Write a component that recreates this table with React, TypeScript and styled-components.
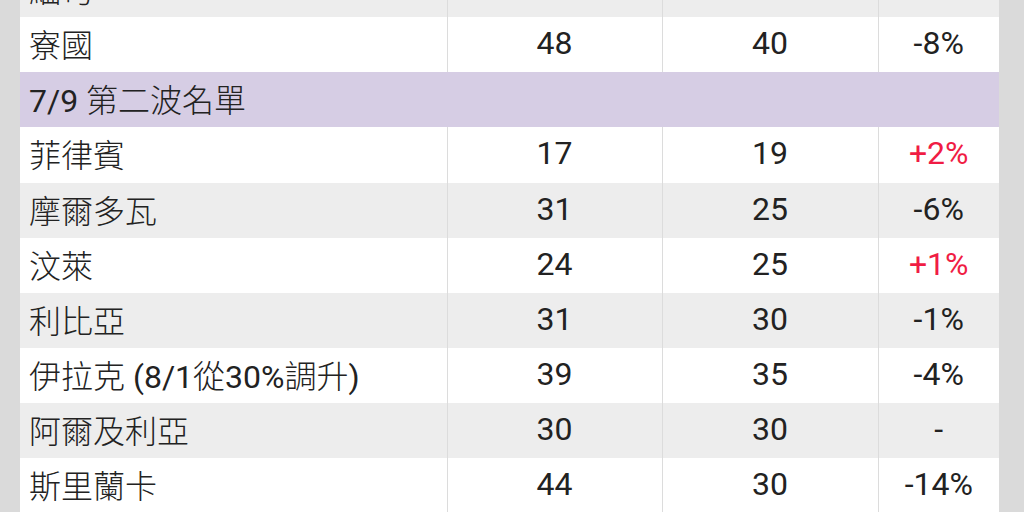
import styled, { createGlobalStyle } from "styled-components";

type Row =
  | { kind: "group"; label: string }
  | { kind: "data"; name: string; before: string; after: string; change: string; shaded: boolean };

const rows: Row[] = [
  { kind: "data", name: "緬甸", before: "", after: "", change: "", shaded: true },
  { kind: "data", name: "寮國", before: "48", after: "40", change: "-8%", shaded: false },
  { kind: "group", label: "7/9 第二波名單" },
  { kind: "data", name: "菲律賓", before: "17", after: "19", change: "+2%", shaded: false },
  { kind: "data", name: "摩爾多瓦", before: "31", after: "25", change: "-6%", shaded: true },
  { kind: "data", name: "汶萊", before: "24", after: "25", change: "+1%", shaded: false },
  { kind: "data", name: "利比亞", before: "31", after: "30", change: "-1%", shaded: true },
  { kind: "data", name: "伊拉克 (8/1從30%調升)", before: "39", after: "35", change: "-4%", shaded: false },
  { kind: "data", name: "阿爾及利亞", before: "30", after: "30", change: "-", shaded: true },
  { kind: "data", name: "斯里蘭卡", before: "44", after: "30", change: "-14%", shaded: false },
];

// CJK runs get a lighter weight, latin stays regular
function Label({ text }: { text: string }) {
  const parts = text.split(/([\u3400-\u9fff]+)/).filter(Boolean);
  return (
    <>
      {parts.map((p, i) =>
        /[\u3400-\u9fff]/.test(p) ? <Cjk key={i}>{p}</Cjk> : <span key={i}>{p}</span>
      )}
    </>
  );
}

function App() {
  return (
    <>
      <GlobalStyles />
      <Page>
        <Table>
          <colgroup>
            <col style={{ width: 427 }} />
            <col style={{ width: 215 }} />
            <col style={{ width: 216 }} />
            <col />
          </colgroup>
          <tbody>
            {rows.map((row, i) =>
              row.kind === "group" ? (
                <GroupRow key={i}>
                  <GroupCell colSpan={4}>
                    <Label text={row.label} />
                  </GroupCell>
                </GroupRow>
              ) : (
                <DataRow key={i} $shaded={row.shaded}>
                  <NameCell>
                    <Label text={row.name} />
                  </NameCell>
                  <NumCell>{row.before}</NumCell>
                  <NumCell>{row.after}</NumCell>
                  <NumCell $up={row.change.startsWith("+")}>{row.change}</NumCell>
                </DataRow>
              )
            )}
          </tbody>
        </Table>
      </Page>
    </>
  );
}

export default App;

const GlobalStyles = createGlobalStyle`
  html, body {
    margin: 0;
    padding: 0;
    background: #dadada;
    overflow: hidden;
  }
  body {
    font-family: Roboto, "Noto Sans CJK TC", sans-serif;
  }
`;

const Page = styled.div`
  width: 1024px;
  height: 512px;
  padding: 0 25px 0 20px;
  box-sizing: border-box;
  overflow: hidden;
`;

const Table = styled.table`
  width: 979px;
  margin-top: -38px;
  border-collapse: collapse;
  table-layout: fixed;
  font-size: 32px;
  color: #222222;
`;

const Cjk = styled.span`
  font-family: "Noto Sans CJK TC", sans-serif;
  font-weight: 300;
`;

const DataRow = styled.tr<{ $shaded: boolean }>`
  height: 55.125px;
  background: ${(p) => (p.$shaded ? "#ededed" : "#ffffff")};
`;

const GroupRow = styled.tr`
  height: 55.125px;
  background: #d6cde4;
`;

const GroupCell = styled.td`
  padding: 0 10px 3px 9px;
  white-space: nowrap;
`;

const NameCell = styled.td`
  padding: 0 10px 3px 9px;
  white-space: nowrap;
  border-right: 1px solid #dcdcdc;
`;

const NumCell = styled.td<{ $up?: boolean }>`
  padding: 0 0 3px;
  text-align: center;
  color: ${(p) => (p.$up ? "#f01c44" : "#222222")};
  border-right: 1px solid #dcdcdc;

  &:last-child {
    border-right: none;
  }
`;
